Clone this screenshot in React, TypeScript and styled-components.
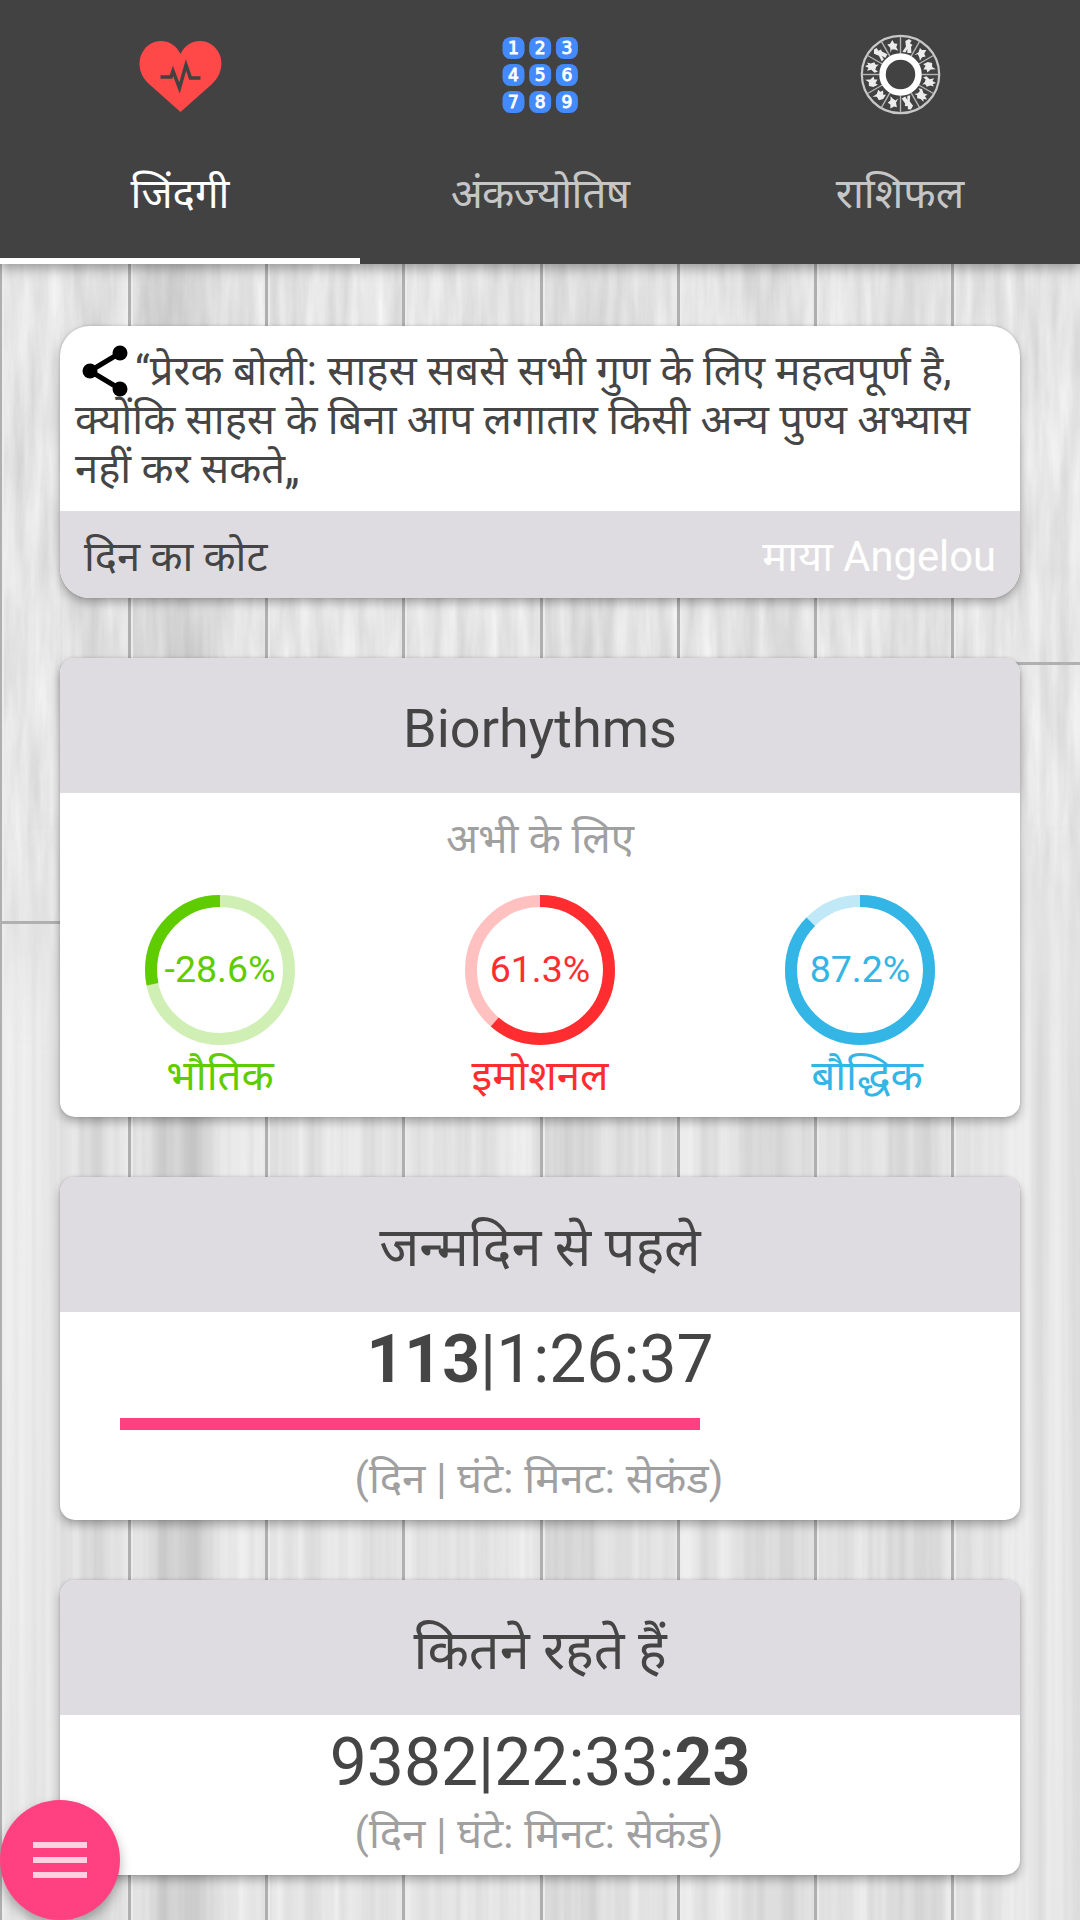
import React from "react";
import styled, { createGlobalStyle } from "styled-components";

const Global = createGlobalStyle`
  * { box-sizing: border-box; }
  body { margin: 0; background: #e3e3e3; font-family: Roboto, "Noto Sans Devanagari", "Noto Sans", sans-serif; color: #454545; }
`;

const Screen = styled.div`
  position: relative;
  width: 1080px;
  height: 1920px;
  overflow: hidden;
  display: flex;
  flex-direction: column;
`;
const Backdrop = styled.svg`
  position: absolute;
  inset: 0;
  z-index: 0;
`;
const TabBar = styled.nav`
  position: relative;
  z-index: 1;
  flex: none;
  height: 264px;
  display: grid;
  grid-template-columns: repeat(3, 1fr);
  background: #424242;
  box-shadow: 0 4px 12px rgba(0, 0, 0, 0.35);
`;
const Tab = styled.div<{ $active?: boolean }>`
  display: flex;
  flex-direction: column;
  align-items: center;
  padding-top: 30px;
  gap: 46px;
  border-bottom: 6px solid ${(p) => (p.$active ? "#fff" : "transparent")};
  color: ${(p) => (p.$active ? "#fff" : "#c6c6c6")};
`;
const TabLabel = styled.span<{ $tight?: boolean }>`
  font-size: 42px;
  line-height: 56px;
  letter-spacing: ${(p) => (p.$tight ? "-0.7px" : "normal")};
  white-space: nowrap;
`;
const Feed = styled.main`
  position: relative;
  z-index: 1;
  display: flex;
  flex-direction: column;
  padding: 62px 60px 0;
  gap: 60px;
`;
const Card = styled.section<{ $h: number; $radius?: number }>`
  flex: none;
  height: ${(p) => p.$h}px;
  border-radius: ${(p) => p.$radius ?? 15}px;
  overflow: hidden;
  background: #fff;
  box-shadow: 0 5px 10px rgba(0, 0, 0, 0.28), 0 0 3px rgba(0, 0, 0, 0.16);
  display: flex;
  flex-direction: column;
`;
const Quote = styled.p`
  margin: 0;
  height: 185px;
  padding: 20px 15px 0;
  font-size: 41.75px;
  line-height: 49px;
  white-space: nowrap;
`;
const ShareIcon = styled.svg`
  width: 60px;
  height: 52px;
  margin: -5px 0;
  vertical-align: -7px;
`;
const QuoteFooter = styled.footer`
  flex: 1;
  display: flex;
  justify-content: space-between;
  align-items: center;
  padding: 11px 24px 0;
  background: #dedce0;
  font-size: 41.7px;
`;
const Author = styled.span`
  color: #fff;
`;
const CardTitle = styled.h2<{ $drop?: number }>`
  margin: 0;
  flex: none;
  height: 135px;
  display: flex;
  align-items: center;
  justify-content: center;
  padding-top: ${(p) => p.$drop ?? 14}px;
  background: #dedce0;
  font-size: 54px;
  font-weight: 400;
`;
const Caption = styled.p<{ $top?: number }>`
  margin: ${(p) => p.$top ?? 0}px 0 0;
  text-align: center;
  font-size: 42px;
  line-height: 56px;
  color: #a0a0a0;
`;
const UnitsCaption = styled(Caption)`
  word-spacing: 0.4px;
  padding-right: 2px;
`;
const Gauges = styled.div`
  display: grid;
  grid-template-columns: repeat(3, 1fr);
  margin-top: 28px;
`;
const Gauge = styled.div<{ $color: string }>`
  display: flex;
  flex-direction: column;
  align-items: center;
  color: ${(p) => p.$color};
`;
const Dial = styled.div`
  display: grid;
  place-items: center;
  width: 150px;
  height: 150px;
  > * { grid-area: 1 / 1; }
`;
const Value = styled.span`
  font-size: 37.5px;
  line-height: 44px;
  padding-bottom: 2px;
`;
const GaugeLabel = styled.span<{ $indent: number }>`
  font-size: 42px;
  line-height: 56px;
  margin-top: 3px;
  padding-left: ${(p) => p.$indent}px;
`;
const Counter = styled.div<{ $h: number }>`
  text-align: center;
  font-size: 66px;
  line-height: 78px;
  padding-top: 9px;
  height: ${(p) => p.$h}px;
  flex: none;
`;
const Track = styled.div`
  height: 12px;
  margin: 10px 60px 0;
`;
const Fill = styled.div`
  height: 100%;
  background: #ff4081;
`;
const Fab = styled.button`
  position: absolute;
  z-index: 2;
  left: 0;
  bottom: 0;
  width: 120px;
  height: 120px;
  border: 0;
  padding: 0;
  border-radius: 50%;
  background: #ff4081;
  box-shadow: 0 6px 12px rgba(0, 0, 0, 0.3);
  display: flex;
  flex-direction: column;
  align-items: center;
  justify-content: center;
  gap: 9px;
`;
const FabBar = styled.span`
  width: 54px;
  height: 6px;
  background: #ffd1e0;
`;

const seams = [0, 129, 266, 403, 541, 678, 815, 952];

const shades = [
  { x: 130, w: 110, o: 0.1 },
  { x: 60, w: 69, o: 0.05 },
  { x: 541, w: 90, o: 0.05 },
  { x: 730, w: 85, o: 0.05 },
  { x: 890, w: 62, o: 0.04 },
];

function Planks() {
  return (
    <Backdrop width="1080" height="1920" viewBox="0 0 1080 1920">
      <defs>
        <filter id="grain" x="0" y="0" width="100%" height="100%" colorInterpolationFilters="sRGB">
          <feTurbulence type="fractalNoise" baseFrequency="0.07 0.008" numOctaves={4} seed={8} />
          <feColorMatrix values="0.16 0 0 0 0.82  0.16 0 0 0 0.82  0.16 0 0 0 0.82  0 0 0 0 1" />
        </filter>
        <filter id="streaks" x="0" y="0" width="100%" height="100%" colorInterpolationFilters="sRGB">
          <feTurbulence type="fractalNoise" baseFrequency="0.07 0.0004" numOctaves={3} seed={5} />
          <feColorMatrix values="0.15 0 0 0 0.82  0.15 0 0 0 0.82  0.15 0 0 0 0.82  0 0 0 0 1" />
        </filter>
        <linearGradient id="shade">
          <stop offset="0" stopColor="#000" stopOpacity="0.3" />
          <stop offset="0.5" stopColor="#000" />
          <stop offset="1" stopColor="#000" stopOpacity="0" />
        </linearGradient>
        <linearGradient id="fade" gradientUnits="userSpaceOnUse" x1="0" y1="820" x2="0" y2="1060">
          <stop offset="0" stopColor="#000" />
          <stop offset="1" stopColor="#fff" />
        </linearGradient>
        <mask id="lower" maskUnits="userSpaceOnUse" x="0" y="0" width="1080" height="1920">
          <rect width="1080" height="1920" fill="url(#fade)" />
        </mask>
      </defs>
      <rect width="1080" height="1920" filter="url(#grain)" />
      <g mask="url(#lower)">
        <rect width="1080" height="1920" filter="url(#streaks)" />
      </g>
      {shades.map((s) => (
        <rect key={s.x} x={s.x} width={s.w} height="1920" fill="url(#shade)" opacity={s.o} />
      ))}
      {seams.map((x) => (
        <g key={x}>
          <rect x={x - 1} width="3" height="1920" fill="#afafaf" />
          <rect x={x + 2} width="2" height="1920" fill="#ececec" />
        </g>
      ))}
      <rect x="2" y="921" width="126" height="3" fill="#b0b0b0" />
      <rect x="954" y="662" width="126" height="3" fill="#b0b0b0" />
    </Backdrop>
  );
}

function HeartIcon() {
  return (
    <svg width="90" height="90" viewBox="0 0 90 90">
      <path d="M45.500 82 L14 54 C3 44 2 29 9 20 C18 7 38 8 45.500 24 C53 8 73 7 82 20 C89 29 88 44 77 54 Z" fill="#ff4848" />
      <path d="M25.500 47H36L38 41L44.500 58L51 35L55.500 48H65.500" fill="none" stroke="#424242" strokeWidth="3.500" />
    </svg>
  );
}

function DigitsIcon() {
  return (
    <svg width="90" height="90" viewBox="0 0 90 90">
      {Array.from({ length: 9 }, (_, i) => {
        const x = 7.500 + (i % 3) * 26.700;
        const y = 7 + Math.floor(i / 3) * 27;
        return (
          <g key={i}>
            <rect x={x} y={y} width="22" height="22" rx="8" fill="#448aff" />
            <text x={x + 11} y={y + 17} textAnchor="middle" fontFamily="DejaVu Sans, sans-serif" fontSize="17" fill="#fff" stroke="#fff" strokeWidth="0.9">{i + 1}</text>
          </g>
        );
      })}
    </svg>
  );
}

const figures = [
  "M-4 7L-2 1L-4 -4L-1 -7L2 -6L1 -3L4 -2L3 0L5 6L1 7L0 3L-1 7Z",
  "M-5 4L-3 0L-5 -4L-2 -3L-1 -7L1 -4L3 -6L3 -2L5 1L3 3L4 6L1 4L-2 4L-3 7Z",
  "M-5 0L-3 -4L1 -3L4 -6L3 -1L5 3L2 3L1 6L-2 3L-4 5Z",
  "M-4 6L-3 1L-5 -3L-2 -3L1 -6L2 -2L5 -1L3 2L4 6L1 4L-2 3Z",
];

function ZodiacIcon() {
  return (
    <svg width="90" height="90" viewBox="0 0 90 90">
      <circle cx="45.500" cy="44.500" r="38.700" fill="none" stroke="#c8c8c8" strokeWidth="2.200" />
      {Array.from({ length: 12 }, (_, i) => (
        <g key={i} transform={`translate(45.500 44.500) rotate(${i * 30})`}>
          <line y1="-21" y2="-38" stroke="#b4b4b4" strokeWidth="1.400" />
          <path d={figures[(i * 3 + (i >> 2)) % 4]} transform="rotate(15) translate(0 -29.500)" fill="#ececec" />
        </g>
      ))}
      <circle cx="45.500" cy="44.500" r="18" fill="none" stroke="#fff" strokeWidth="6.500" />
    </svg>
  );
}

function Ring({ color, track, share, reverse }: { color: string; track: string; share: number; reverse: boolean }) {
  const c = 2 * Math.PI * 69;
  return (
    <svg width="150" height="150" viewBox="0 0 150 150">
      <circle cx="75" cy="75" r="69" fill="none" stroke={track} strokeWidth="12" />
      <circle cx="75" cy="75" r="69" fill="none" stroke={color} strokeWidth="12" strokeDasharray={`${c * share} ${c}`}
        transform={reverse ? "translate(150 0) scale(-1 1) rotate(-90 75 75)" : "rotate(-90 75 75)"} />
    </svg>
  );
}

const rhythms = [
  { label: "भौतिक", value: "-28.6%", share: 0.283, reverse: true, indent: 0, color: "#5fcc00", track: "#cfefb4" },
  { label: "इमोशनल", value: "61.3%", share: 0.613, reverse: false, indent: 0, color: "#ff2d2f", track: "#ffc0c0" },
  { label: "बौद्धिक", value: "87.2%", share: 0.872, reverse: false, indent: 14, color: "#33b5e5", track: "#c0e8f7" },
];

export default function App() {
  return (
    <Screen>
      <Global />
      <Planks />
      <TabBar>
        <Tab $active><HeartIcon /><TabLabel>जिंदगी</TabLabel></Tab>
        <Tab><DigitsIcon /><TabLabel $tight>अंकज्योतिष</TabLabel></Tab>
        <Tab><ZodiacIcon /><TabLabel>राशिफल</TabLabel></Tab>
      </TabBar>
      <Feed>
        <Card $h={272} $radius={30}>
          <Quote>
            <ShareIcon viewBox="0 0 60 52">
              <path d="M45 8L15 26L45 44" fill="none" stroke="#000" strokeWidth="5" />
              <circle cx="45" cy="8" r="7.500" /><circle cx="15" cy="26" r="7.500" /><circle cx="45" cy="44" r="7.500" />
            </ShareIcon>
            “प्रेरक बोली: साहस सबसे सभी गुण के लिए महत्वपूर्ण है,<br />
            क्योंकि साहस के बिना आप लगातार किसी अन्य पुण्य अभ्यास<br />
            नहीं कर सकते„
          </Quote>
          <QuoteFooter><span>दिन का कोट</span><Author>माया Angelou</Author></QuoteFooter>
        </Card>
        <Card $h={459}>
          <CardTitle $drop={6}>Biorhythms</CardTitle>
          <Caption $top={18}>अभी के लिए</Caption>
          <Gauges>
            {rhythms.map((r) => (
              <Gauge key={r.label} $color={r.color}>
                <Dial>
                  <Ring color={r.color} track={r.track} share={r.share} reverse={r.reverse} />
                  <Value>{r.value}</Value>
                </Dial>
                <GaugeLabel $indent={r.indent}>{r.label}</GaugeLabel>
              </Gauge>
            ))}
          </Gauges>
        </Card>
        <Card $h={343}>
          <CardTitle>जन्मदिन से पहले</CardTitle>
          <Counter $h={96}><b>113</b>|1:26:37</Counter>
          <Track><Fill style={{ width: `${(580 / 840) * 100}%` }} /></Track>
          <UnitsCaption $top={21}>(दिन | घंटे: मिनट: सेकंड)</UnitsCaption>
        </Card>
        <Card $h={295}>
          <CardTitle>कितने रहते हैं</CardTitle>
          <Counter $h={91}>9382|22:33:<b>23</b></Counter>
          <UnitsCaption>(दिन | घंटे: मिनट: सेकंड)</UnitsCaption>
        </Card>
      </Feed>
      <Fab aria-label="menu"><FabBar /><FabBar /><FabBar /></Fab>
    </Screen>
  );
}
